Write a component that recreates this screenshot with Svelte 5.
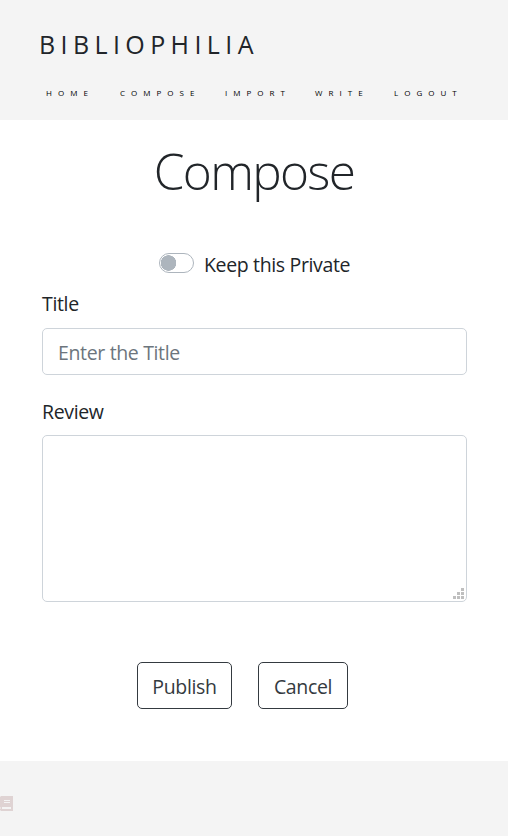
<script>
  const links = [
    { label: 'HOME', width: 74, spacing: 6.1 },
    { label: 'COMPOSE', width: 105, spacing: 6 },
    { label: 'IMPORT', width: 90, spacing: 6 },
    { label: 'WRITE', width: 79, spacing: 6.1 },
    { label: 'LOGOUT', width: 72, spacing: 6 }
  ];
  let isPrivate = $state(false);
  let title = $state('');
  let review = $state('');
</script>

<div class="page">
  <header>
    <div class="brand">BIBLIOPHILIA</div>
    <nav>
      {#each links as link}
        <a href="#top" style="width: {link.width}px; letter-spacing: {link.spacing}px">{link.label}</a>
      {/each}
    </nav>
  </header>

  <main>
    <h1>Compose</h1>
    <form onsubmit={(e) => e.preventDefault()}>
      <label class="switch-row">
        <input class="switch" type="checkbox" bind:checked={isPrivate} />
        <span class="switch-label">Keep this Private</span>
      </label>
      <label class="caption title-caption" for="title"><span>Title</span></label>
      <input class="field" id="title" type="text" placeholder="Enter the Title" bind:value={title} />
      <label class="caption review-caption" for="review"><span>Review</span></label>
      <div class="area">
        <textarea class="field" id="review" bind:value={review}></textarea>
        <svg class="grip" width="11" height="11" viewBox="0 0 11 11" fill="#bfbfbf" aria-hidden="true">
          <path d="M8 0h3v3H8zM4 4h3v3H4zM8 4h3v3H8zM0 8h3v3H0zM4 8h3v3H4zM8 8h3v3H8z" />
        </svg>
      </div>
      <div class="actions">
        <button class="publish" type="submit">Publish</button>
        <button class="cancel" type="button">Cancel</button>
      </div>
    </form>
  </main>

  <footer>
    <svg width="14" height="15" viewBox="0 0 14 15" aria-hidden="true">
      <path fill="#dfd3d3" d="M0 1 1 0h12v15H1l-1-1v-1l1-1-1-1z" />
      <path fill="#f4f4f4" d="M4 4h6v1H4zM4 6h6v1H4zM2 11h9v2H2z" />
    </svg>
  </footer>
</div>

<style>
  :global(body) { margin: 0; background: #fff; }
  .page {
    display: flex;
    flex-direction: column;
    width: 508px;
    height: 836px;
    overflow: hidden;
    color: #212529;
    font-family: 'Segoe UI', 'Open Sans', 'Noto Sans', sans-serif;
    font-size: 19.5px;
    letter-spacing: -0.35px;
  }
  .page * { box-sizing: border-box; }
  header { height: 120px; background: #f4f4f4; flex: none; }
  .brand {
    padding: 26px 0 0 39px;
    height: 82px;
    font-size: 25px;
    line-height: 36px;
    letter-spacing: 5.4px;
    white-space: nowrap;
  }
  nav { display: flex; padding-left: 46px; }
  nav a {
    flex: none;
    color: #000;
    font-size: 8px;
    line-height: 22px;
    text-decoration: none;
    white-space: nowrap;
  }
  main { height: 641px; flex: none; }
  h1 {
    margin: 0;
    padding-top: 21px;
    height: 133px;
    font-size: 49.5px;
    font-weight: 300;
    line-height: 60px;
    letter-spacing: -1.7px;
    text-align: center;
  }
  form { display: flex; flex-direction: column; padding: 0 41px 0 42px; }
  .switch-row { display: flex; padding-left: 117px; height: 38px; }
  .switch {
    appearance: none;
    flex: none;
    width: 35px;
    height: 20px;
    margin: 0 10px 0 0;
    border: 1px solid #adb5bd;
    border-radius: 10px;
    background: radial-gradient(circle at 8.5px 9px, #adb5bd 7.5px, transparent 8px);
  }
  .switch-label { line-height: 24px; white-space: nowrap; }
  .caption { line-height: 26px; }
  .title-caption { height: 37px; }
  .review-caption { height: 36px; margin-top: 24px; }
  .field {
    display: block;
    width: 100%;
    border: 1px solid #ced4da;
    border-radius: 5px;
    padding: 8px 15px;
    background: #fff;
    color: #495057;
    font: inherit;
    letter-spacing: inherit;
    outline: none;
  }
  input.field { height: 47px; padding: 2px 15px 0; }
  .field::placeholder { color: #6c757d; opacity: 1; }
  .area { position: relative; }
  textarea.field { height: 167px; resize: none; }
  .grip { position: absolute; right: 3px; bottom: 3px; }
  .actions { display: flex; gap: 26px; padding: 60px 0 0 95px; }
  button {
    height: 47px;
    border: 1px solid #343a40;
    border-radius: 5px;
    padding: 2px 0 0;
    background: #fff;
    color: #343a40;
    font: inherit;
    letter-spacing: inherit;
  }
  .publish { width: 95px; }
  .cancel { width: 90px; }
  footer { display: flex; flex: 1; padding-top: 35px; background: #f4f4f4; }
</style>
